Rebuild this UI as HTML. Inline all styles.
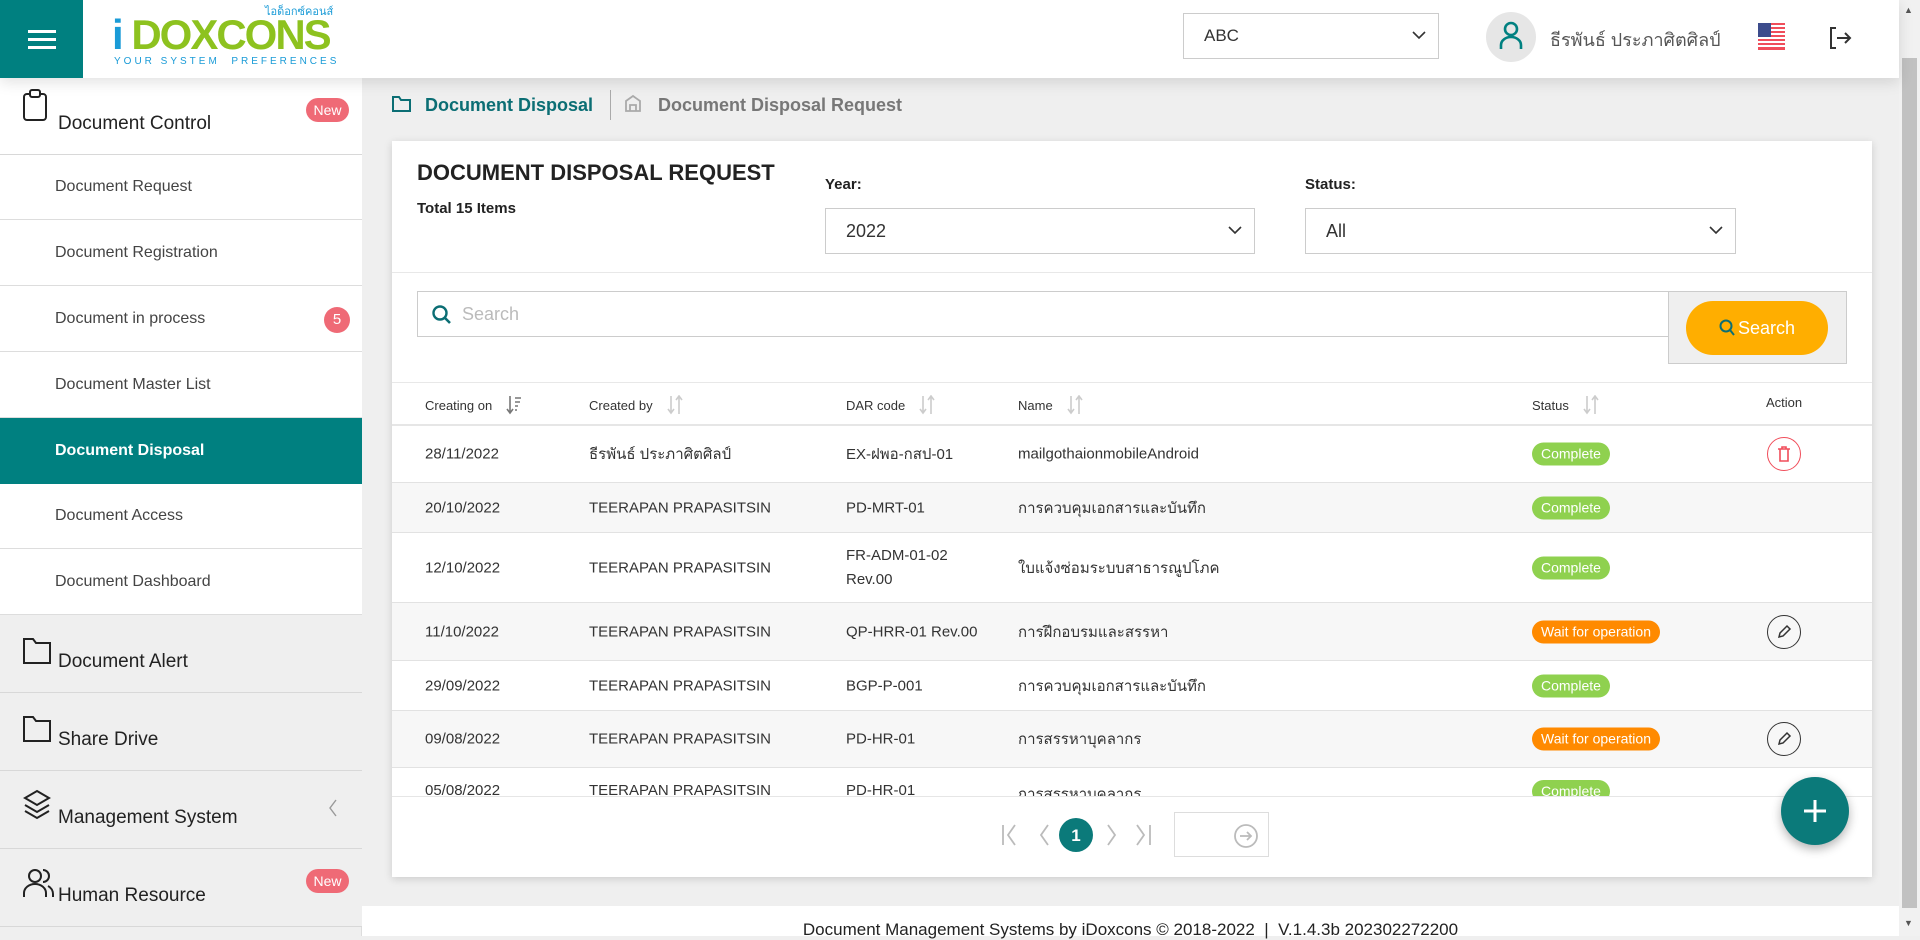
<!DOCTYPE html>
<html><head><meta charset="utf-8"><style>
*{box-sizing:border-box;margin:0;padding:0}
body{width:1920px;height:936px;overflow:hidden;font-family:"Liberation Sans","DejaVu Sans",sans-serif;background:#efefef;position:relative;color:#333}
.abs{position:absolute}
#hdr{left:0;top:0;width:1899px;height:78px;background:#fff;box-shadow:0 4px 14px rgba(0,0,0,.12);z-index:5}
#ham{left:0;top:0;width:83px;height:78px;background:#008080}
#ham i{position:absolute;left:28px;width:28px;height:3px;background:#fff}
#side{left:0;top:78px;width:362px;height:858px;background:#efefef;border-right:1px solid #ddd}
.it{position:absolute;left:0;width:362px;border-bottom:1px solid #ddd;font-size:16px;color:#444;display:flex;align-items:center;padding-left:55px;background:#fff}
.big{position:absolute;left:0;width:362px;border-bottom:1px solid #d8d8d8;font-size:19px;color:#222;background:#efefef}
.big svg{position:absolute;left:22px}
.big span{position:absolute;left:58px}
.new{position:absolute;left:306px;width:43px;height:24px;border-radius:12px;background:#ef6a76;color:#fff;font-size:14px;text-align:center;line-height:24px}
#card{left:392px;top:141px;width:1480px;height:736px;background:#fff;box-shadow:0 2px 8px rgba(0,0,0,.15)}
.sel{position:absolute;border:1px solid #ccc;background:#fff;font-size:18px;color:#333;padding-left:20px;display:flex;align-items:center}
.chev{position:absolute;right:12px;top:50%;margin-top:-6px}
.th{position:absolute;top:395px;font-size:13px;color:#333;display:flex;align-items:center}
.row{position:absolute;left:392px;width:1480px;border-bottom:1px solid #e2e2e2;font-size:15px;color:#333}
.row div{position:absolute;top:50%;transform:translateY(-50%)}
.b{display:inline-block;border-radius:12px;color:#fff;font-size:14px;height:23px;line-height:23px;padding:0 9px}
.g{background:#8fd14f}.o{background:#ff8a00}
.sort{margin-left:14px}
</style></head><body>
<div id="hdr" class="abs">
 <div id="ham" class="abs"><i style="top:30px"></i><i style="top:38px"></i><i style="top:46px"></i></div>
 <div class="abs" style="left:265px;top:2px;font-size:11px;color:#1a9bd7">ไอด็อกซ์คอนส์</div>
 <div class="abs" style="left:112px;top:12px;font-size:42px;font-weight:bold;letter-spacing:-2px;color:#8dc21f;line-height:46px"><span style="color:#1a9bd7">i</span> DOXCONS</div>
 <div class="abs" style="left:114px;top:56px;font-size:10px;letter-spacing:3px;color:#1a9bd7">YOUR SYSTEM&nbsp; PREFERENCES</div>
 <div class="sel" style="left:1183px;top:13px;width:256px;height:46px;font-size:17px">ABC<svg class="chev" width="14" height="10"><path d="M1 2l6 6 6-6" fill="none" stroke="#333" stroke-width="1.6"/></svg></div>
 <div class="abs" style="left:1486px;top:12px;width:50px;height:50px;border-radius:25px;background:#e6e6e6"></div>
 <svg class="abs" style="left:1497px;top:20px" width="28" height="30"><circle cx="14" cy="9" r="6" fill="none" stroke="#008080" stroke-width="2.6"/><path d="M4 29v-4a10 8 0 0 1 20 0v4" fill="none" stroke="#008080" stroke-width="2.6"/></svg>
 <div class="abs" style="left:1550px;top:25px;font-size:18px;color:#555">ธีรพันธ์ ประภาศิตศิลป์</div>
 <svg class="abs" style="left:1758px;top:23px" width="27" height="27"><g fill="#f04d5a"><rect y="0" width="27" height="2"/><rect y="4" width="27" height="2"/><rect y="8" width="27" height="2"/><rect y="12" width="27" height="2"/><rect y="16" width="27" height="2"/><rect y="20" width="27" height="2"/><rect y="24" width="27" height="3"/></g><rect width="13" height="14" fill="#3c4c8c"/></svg>
 <svg class="abs" style="left:1828px;top:26px" width="24" height="24"><path d="M8 2H3v20h5M9 12h13M17 7l5 5-5 5" fill="none" stroke="#333" stroke-width="2"/></svg>
</div>
<div class="abs" style="left:1899px;top:0;width:21px;height:936px;background:#f1f1f1"><div class="abs" style="left:3px;top:58px;width:15px;height:850px;background:#c1c1c1"></div><div class="abs" style="left:5px;top:5px;font-size:9px;color:#555">▲</div><div class="abs" style="left:5px;top:918px;font-size:9px;color:#555">▼</div></div>

<div id="side" class="abs">
 <div class="big" style="top:0;height:77px;background:#fff"><svg style="top:11px" width="26" height="32"><rect x="2" y="5" width="22" height="26" rx="3" fill="none" stroke="#222" stroke-width="2"/><rect x="8" y="1" width="10" height="7" rx="2" fill="#fff" stroke="#222" stroke-width="2"/></svg><span style="top:35px">Document Control</span><div class="new" style="top:20px">New</div></div>
 <div class="it" style="top:77px;height:65px">Document Request</div>
 <div class="it" style="top:142px;height:66px">Document Registration</div>
 <div class="it" style="top:208px;height:66px">Document in process<div class="abs" style="left:324px;top:21px;width:26px;height:26px;border-radius:13px;background:#ef6a76;color:#fff;font-size:15px;text-align:center;line-height:26px">5</div></div>
 <div class="it" style="top:274px;height:66px">Document Master List</div>
 <div class="it" style="top:340px;height:66px;background:#008080;color:#fff;font-weight:bold;border:none">Document Disposal</div>
 <div class="it" style="top:406px;height:65px">Document Access</div>
 <div class="it" style="top:471px;height:66px">Document Dashboard</div>
 <div class="big" style="top:537px;height:78px"><svg style="top:20px" width="30" height="30"><path d="M2 4h9l3 4h14v20H2z" fill="none" stroke="#222" stroke-width="2"/></svg><span style="top:36px">Document Alert</span></div>
 <div class="big" style="top:615px;height:78px"><svg style="top:20px" width="30" height="30"><path d="M2 4h9l3 4h14v20H2z" fill="none" stroke="#222" stroke-width="2"/></svg><span style="top:36px">Share Drive</span></div>
 <div class="big" style="top:693px;height:78px"><svg style="top:18px" width="30" height="32"><path d="M15 2l12 7-12 7-12-7zM3 16l12 7 12-7M3 22l12 7 12-7" fill="none" stroke="#222" stroke-width="2"/></svg><span style="top:36px">Management System</span><svg style="left:328px;top:28px" width="10" height="18"><path d="M8 1L2 9l6 8" fill="none" stroke="#999" stroke-width="1.4"/></svg></div>
 <div class="big" style="top:771px;height:78px"><svg style="top:18px" width="34" height="32"><circle cx="13" cy="9" r="6" fill="none" stroke="#222" stroke-width="2"/><path d="M2 30v-4a11 9 0 0 1 22 0v4M21 3a6 6 0 0 1 0 12M26 19a9 9 0 0 1 5 8v3" fill="none" stroke="#222" stroke-width="2"/></svg><span style="top:36px">Human Resource</span><div class="new" style="top:20px">New</div></div>
</div>

<svg class="abs" style="left:392px;top:95px" width="20" height="18"><path d="M1 2h6l2 3h9v11H1z" fill="none" stroke="#0b6e74" stroke-width="2"/></svg>
<div class="abs" style="left:425px;top:95px;font-size:18px;font-weight:bold;color:#0b6e74">Document Disposal</div>
<div class="abs" style="left:610px;top:90px;width:1px;height:30px;background:#aaa"></div>
<svg class="abs" style="left:624px;top:94px" width="18" height="18"><path d="M2 17V7l7-5 7 5v10zM6 17v-6h6v6" fill="none" stroke="#aaa" stroke-width="1.8"/></svg>
<div class="abs" style="left:658px;top:95px;font-size:18px;font-weight:bold;color:#777">Document Disposal Request</div>

<div id="card" class="abs">
 <div class="abs" style="left:25px;top:19px;font-size:22px;font-weight:bold;color:#222">DOCUMENT DISPOSAL REQUEST</div>
 <div class="abs" style="left:25px;top:59px;font-size:15px;font-weight:bold;color:#222">Total 15 Items</div>
 <div class="abs" style="left:433px;top:35px;font-size:15px;font-weight:bold;color:#222">Year:</div>
 <div class="sel" style="left:433px;top:67px;width:430px;height:46px">2022<svg class="chev" width="14" height="10"><path d="M1 2l6 6 6-6" fill="none" stroke="#333" stroke-width="1.6"/></svg></div>
 <div class="abs" style="left:913px;top:35px;font-size:15px;font-weight:bold;color:#222">Status:</div>
 <div class="sel" style="left:913px;top:67px;width:431px;height:46px">All<svg class="chev" width="14" height="10"><path d="M1 2l6 6 6-6" fill="none" stroke="#333" stroke-width="1.6"/></svg></div>
 <div class="abs" style="left:0;top:131px;width:1480px;height:1px;background:#e8e8e8"></div>
 <div class="abs" style="left:25px;top:150px;width:1252px;height:46px;border:1px solid #ccc"></div>
 <svg class="abs" style="left:40px;top:164px" width="20" height="20"><circle cx="8" cy="8" r="6.5" fill="none" stroke="#0b6e74" stroke-width="2.4"/><path d="M13 13l5 5" stroke="#0b6e74" stroke-width="2.6"/></svg>
 <div class="abs" style="left:70px;top:163px;font-size:18px;color:#bbb">Search</div>
 <div class="abs" style="left:1276px;top:150px;width:179px;height:73px;background:#efefef;border:1px solid #ccc"></div>
 <div class="abs" style="left:1294px;top:160px;width:142px;height:54px;border-radius:27px;background:#ffae00;color:#fff;font-size:18px;display:flex;align-items:center;justify-content:center"><svg width="16" height="18" style="margin-right:3px"><circle cx="7" cy="7" r="5.5" fill="none" stroke="#0b6e74" stroke-width="2"/><path d="M11 11l4 5" stroke="#0b6e74" stroke-width="2"/></svg>Search</div>
 <div class="abs" style="left:0;top:241px;width:1480px;height:1px;background:#e8e8e8"></div>
 <div class="abs" style="left:0;top:283px;width:1480px;height:2px;background:#e6e6e6"></div>
 <div class="abs" style="left:0;top:655px;width:1480px;height:1px;background:#e6e6e6"></div>
</div>
<div class="th" style="left:425px">Creating on<svg class="sort" width="16" height="20"><path d="M4 1v17M1 14l3 4 3-4" fill="none" stroke="#777" stroke-width="1.6"/><path d="M9 3h6M9 7h5M9 11h3M9 15h2" stroke="#777" stroke-width="1.6"/></svg></div>
<div class="th" style="left:589px">Created by<svg class="sort" width="16" height="20"><path d="M4 1v17M1 14l3 4 3-4M12 2v17M9 5l3-4 3 4" fill="none" stroke="#ccc" stroke-width="1.6"/></svg></div>
<div class="th" style="left:846px">DAR code<svg class="sort" width="16" height="20"><path d="M4 1v17M1 14l3 4 3-4M12 2v17M9 5l3-4 3 4" fill="none" stroke="#ccc" stroke-width="1.6"/></svg></div>
<div class="th" style="left:1018px">Name<svg class="sort" width="16" height="20"><path d="M4 1v17M1 14l3 4 3-4M12 2v17M9 5l3-4 3 4" fill="none" stroke="#ccc" stroke-width="1.6"/></svg></div>
<div class="th" style="left:1532px">Status<svg class="sort" width="16" height="20"><path d="M4 1v17M1 14l3 4 3-4M12 2v17M9 5l3-4 3 4" fill="none" stroke="#ccc" stroke-width="1.6"/></svg></div>
<div class="th" style="left:1766px">Action</div>

<div class="row" style="top:426px;height:57px"><div style="left:33px">28/11/2022</div><div style="left:197px">ธีรพันธ์ ประภาศิตศิลป์</div><div style="left:454px">EX-ฝพอ-กสป-01</div><div style="left:626px">mailgothaionmobileAndroid</div><div style="left:1140px"><span class="b g">Complete</span></div><div style="left:1375px;width:34px;height:34px;border:1.5px solid #f04d5a;border-radius:17px"><svg style="position:absolute;left:9px;top:7px" width="14" height="18"><path d="M1 4h12M5 4V2h4v2M3 4v12h8V4" fill="none" stroke="#f04d5a" stroke-width="1.6"/></svg></div></div>
<div class="row" style="top:483px;height:50px;background:#f7f7f7"><div style="left:33px">20/10/2022</div><div style="left:197px">TEERAPAN PRAPASITSIN</div><div style="left:454px">PD-MRT-01</div><div style="left:626px">การควบคุมเอกสารและบันทึก</div><div style="left:1140px"><span class="b g">Complete</span></div></div>
<div class="row" style="top:533px;height:70px"><div style="left:33px">12/10/2022</div><div style="left:197px">TEERAPAN PRAPASITSIN</div><div style="left:454px;line-height:24px">FR-ADM-01-02<br>Rev.00</div><div style="left:626px">ใบแจ้งซ่อมระบบสาธารณูปโภค</div><div style="left:1140px"><span class="b g">Complete</span></div></div>
<div class="row" style="top:603px;height:58px;background:#f7f7f7"><div style="left:33px">11/10/2022</div><div style="left:197px">TEERAPAN PRAPASITSIN</div><div style="left:454px">QP-HRR-01 Rev.00</div><div style="left:626px">การฝึกอบรมและสรรหา</div><div style="left:1140px"><span class="b o">Wait for operation</span></div><div style="left:1375px;width:34px;height:34px;border:1.5px solid #333;border-radius:17px"><svg style="position:absolute;left:8px;top:8px" width="16" height="16"><path d="M3 13l1-4 7-7 3 3-7 7z" fill="none" stroke="#333" stroke-width="1.5"/></svg></div></div>
<div class="row" style="top:661px;height:50px"><div style="left:33px">29/09/2022</div><div style="left:197px">TEERAPAN PRAPASITSIN</div><div style="left:454px">BGP-P-001</div><div style="left:626px">การควบคุมเอกสารและบันทึก</div><div style="left:1140px"><span class="b g">Complete</span></div></div>
<div class="row" style="top:711px;height:57px;background:#f7f7f7"><div style="left:33px">09/08/2022</div><div style="left:197px">TEERAPAN PRAPASITSIN</div><div style="left:454px">PD-HR-01</div><div style="left:626px">การสรรหาบุคลากร</div><div style="left:1140px"><span class="b o">Wait for operation</span></div><div style="left:1375px;width:34px;height:34px;border:1.5px solid #333;border-radius:17px"><svg style="position:absolute;left:8px;top:8px" width="16" height="16"><path d="M3 13l1-4 7-7 3 3-7 7z" fill="none" stroke="#333" stroke-width="1.5"/></svg></div></div>
<div class="abs" style="left:392px;top:768px;width:1480px;height:28px;overflow:hidden;font-size:15px"><div class="abs" style="left:33px;top:14px">05/08/2022</div><div class="abs" style="left:197px;top:14px">TEERAPAN PRAPASITSIN</div><div class="abs" style="left:454px;top:14px">PD-HR-01</div><div class="abs" style="left:626px;top:14px">การสรรหาบุคลากร</div><div class="abs" style="left:1140px;top:12px"><span class="b g">Complete</span></div></div>

<svg class="abs" style="left:1000px;top:814px" width="160" height="42"><g fill="none" stroke="#bbb" stroke-width="1.8"><path d="M3 11v20M15 11l-7 10 7 10M48 11l-7 10 7 10M108 11l7 10-7 10M137 11l7 10-7 10M150 11v20"/></g><circle cx="76" cy="21" r="17" fill="#0b7a7a"/><text x="76" y="27" font-size="17" font-weight="bold" fill="#fff" text-anchor="middle" font-family="Liberation Sans">1</text></svg>
<div class="abs" style="left:1174px;top:812px;width:95px;height:45px;border:1px solid #ddd"><svg style="position:absolute;left:58px;top:10px" width="26" height="26"><circle cx="13" cy="13" r="11" fill="none" stroke="#bbb" stroke-width="1.8"/><path d="M7 13h11M14 9l4 4-4 4" fill="none" stroke="#bbb" stroke-width="1.8"/></svg></div>
<div class="abs" style="left:1781px;top:777px;width:68px;height:68px;border-radius:34px;background:#0b7a7a;box-shadow:0 4px 10px rgba(0,0,0,.3)"><svg style="position:absolute;left:22px;top:22px" width="24" height="24"><path d="M12 1v22M1 12h22" stroke="#fff" stroke-width="3"/></svg></div>

<div class="abs" style="left:362px;top:906px;width:1537px;height:30px;background:#fff;font-size:17px;color:#222;text-align:center;padding-top:14px">Document Management Systems by iDoxcons © 2018-2022 &nbsp;|&nbsp; V.1.4.3b 202302272200</div>
</body></html>
